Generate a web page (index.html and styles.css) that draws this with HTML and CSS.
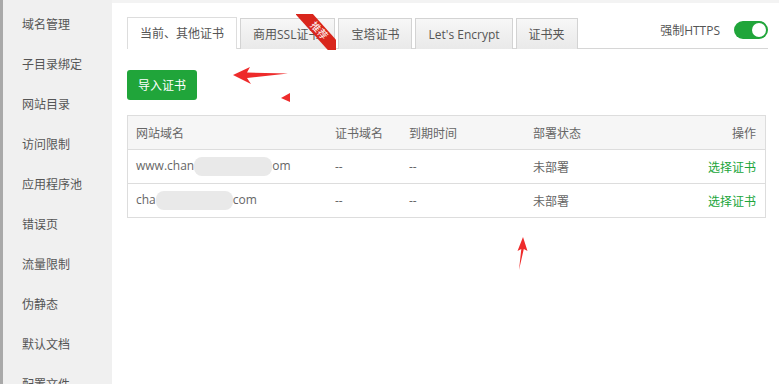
FILE: index.html
```html
<!DOCTYPE html>
<html lang="zh-CN">
<head>
  <meta charset="UTF-8">
  <meta name="viewport" content="width=device-width, initial-scale=1.0">
  <title>SSL</title>
  <link rel="stylesheet" href="styles.css">
</head>
<body>

  <aside class="sidebar">
    <div class="side-item">域名管理</div>
    <div class="side-item">子目录绑定</div>
    <div class="side-item">网站目录</div>
    <div class="side-item">访问限制</div>
    <div class="side-item">应用程序池</div>
    <div class="side-item">错误页</div>
    <div class="side-item">流量限制</div>
    <div class="side-item">伪静态</div>
    <div class="side-item">默认文档</div>
    <div class="side-item">配置文件</div>
  </aside>

  <main class="main">
    <div class="tab-bar">
      <div class="tab active">当前、其他证书</div>
      <div class="tab tab-hot">商用SSL证书
        <span class="ribbon"><span class="ribbon-band">推荐</span></span>
      </div>
      <div class="tab">宝塔证书</div>
      <div class="tab">Let's Encrypt</div>
      <div class="tab">证书夹</div>
      <div class="https">
        <span>强制HTTPS</span>
        <span class="switch"><span class="knob"></span></span>
      </div>
    </div>

    <button class="btn-import">导入证书</button>

    <table class="cert-table">
      <thead>
        <tr>
          <th class="c-site">网站域名</th>
          <th class="c-cert">证书域名</th>
          <th class="c-exp">到期时间</th>
          <th class="c-state">部署状态</th>
          <th class="c-op">操作</th>
        </tr>
      </thead>
      <tbody>
        <tr>
          <td>www.chan<span class="blur blur-1"></span>om</td>
          <td>--</td>
          <td>--</td>
          <td>未部署</td>
          <td class="c-op"><a class="link">选择证书</a></td>
        </tr>
        <tr>
          <td>cha<span class="blur blur-2"></span>com</td>
          <td>--</td>
          <td>--</td>
          <td>未部署</td>
          <td class="c-op"><a class="link">选择证书</a></td>
        </tr>
      </tbody>
    </table>
  </main>

  <!-- annotation arrows -->
  <svg class="marks" width="779" height="384" viewBox="0 0 779 384">
    <polygon points="233,75 250,67 247,72.5 288,73.5 247,78 251,84" fill="#ee2b2b"/>
    <polygon points="281,98 290,93 290,102" fill="#ee2b2b"/>
    <polygon points="523,237 527.5,251 523.8,249 519,270 521.3,249 517.5,251" fill="#ee2b2b"/>
  </svg>

</body>
</html>
```

FILE: styles.css
```css
body {
  margin: 0;
  font-family: "Open Sans", "Noto Sans CJK SC", sans-serif;
  font-size: 12px;
  color: #666;
  background: #f3f3f3;
  display: flex;
  height: 384px;
  overflow: hidden;
  position: relative;
}

.sidebar {
  width: 109px;
  flex-shrink: 0;
  background: #f0f0f0;
  border-left: 3px solid #a9a9a9;
  padding-top: 5px;
}

.side-item {
  height: 40px;
  line-height: 40px;
  padding-left: 19px;
  color: #555;
}

.main {
  flex: 1;
  background: #fff;
  margin-top: 3px;
  padding: 14px 11px 0 15px;
}

/* tabs */
.tab-bar {
  display: flex;
  align-items: flex-end;
  gap: 3px;
  border-bottom: 1px solid #d6d6d6;
  height: 31px;
}

.tab {
  position: relative;
  height: 30px;
  line-height: 31px;
  padding: 0 12px;
  border: 1px solid #d3d3d3;
  border-bottom: none;
  background: linear-gradient(#f7f7f7, #e9e9e9);
  color: #555;
  margin-bottom: -1px;
  white-space: nowrap;
}

.tab.active {
  background: #fff;
  height: 31px;
  border-color: #ddd;
}

.tab-hot {
  padding-right: 14px;
}

.ribbon {
  position: absolute;
  top: -5px;
  right: -2px;
  width: 40px;
  height: 36px;
  overflow: hidden;
}

.ribbon-band {
  position: absolute;
  top: 10px;
  left: -5px;
  width: 56px;
  height: 13px;
  line-height: 13px;
  background: #d9261c;
  color: #fff;
  font-size: 10px;
  text-align: center;
  transform: rotate(48deg);
}

.https {
  margin-left: auto;
  align-self: center;
  display: flex;
  align-items: center;
  gap: 14px;
  color: #555;
  padding-bottom: 6px;
}

.switch {
  width: 34px;
  height: 18px;
  border-radius: 9px;
  background: #20a53a;
  display: flex;
  justify-content: flex-end;
  align-items: center;
  padding: 0 2px;
  box-sizing: border-box;
}

.knob {
  width: 14px;
  height: 14px;
  border-radius: 50%;
  background: #fff;
}

/* button */
.btn-import {
  display: block;
  margin-top: 21px;
  width: 70px;
  height: 30px;
  border: none;
  border-radius: 3px;
  background: #20a53a;
  color: #fff;
  font-family: inherit;
  font-size: 12px;
  padding: 0;
}

/* table */
.cert-table {
  margin-top: 15px;
  width: 639px;
  border-collapse: collapse;
  border: 1px solid #ddd;
  table-layout: fixed;
}

.cert-table th,
.cert-table td {
  height: 33px;
  padding: 0 8px;
  text-align: left;
  font-weight: normal;
  border-bottom: 1px solid #ddd;
  white-space: nowrap;
}

.cert-table th {
  background: #f6f6f6;
  height: 33px;
}

.c-site { width: 183px; }
.c-cert { width: 58px; }
.c-exp { width: 108px; }
.c-state { width: 104px; }

.cert-table .c-op {
  text-align: right;
  padding-right: 9px;
}

.link {
  color: #20a53a;
}

.blur {
  display: inline-block;
  vertical-align: middle;
  height: 19px;
  background: #e9e9e9;
  border-radius: 8px;
}

.blur-1 { width: 78px; }
.blur-2 { width: 77px; }

.marks {
  position: absolute;
  top: 0;
  left: 0;
  pointer-events: none;
}
```
